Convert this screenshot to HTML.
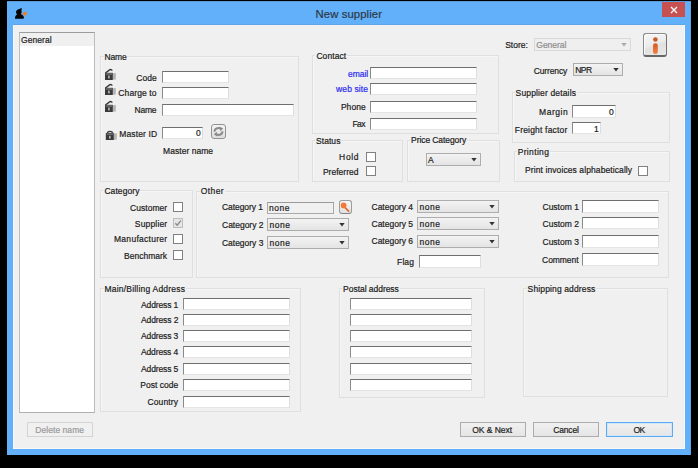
<!DOCTYPE html>
<html><head><meta charset="utf-8"><style>
html,body{margin:0;padding:0;width:698px;height:468px;overflow:hidden;background:#000}
.t{position:absolute;white-space:nowrap;font-family:"Liberation Sans",sans-serif;font-size:8.5px;line-height:11px;color:#1c1c1c;-webkit-text-stroke:0.2px currentColor}
</style></head><body>
<div style="position:absolute;left:0;top:0;width:698px;height:468px;background:#000"></div><div style="position:absolute;left:7.00px;top:1.00px;width:684.00px;height:454.00px;box-sizing:border-box;background:#62b0f9;border-top:1px solid #5a9dda;border-right:1px solid #5ea5e6;"></div><div style="position:absolute;left:13.00px;top:24.00px;width:672.00px;height:1.00px;box-sizing:border-box;background:#5ea6e8;"></div><div style="position:absolute;left:13.00px;top:25.00px;width:672.00px;height:424.00px;box-sizing:border-box;background:#f0f0f0;border:1px solid #f8f8f8;border-top:0;"></div><div class="t" style="left:315.60px;top:8.53px;color:#2d3946;font-size:11.3px;letter-spacing:0.091px;">New supplier</div><div style="position:absolute;left:662.00px;top:2.00px;width:23.00px;height:15.00px;box-sizing:border-box;background:#c75050;"></div><svg style="position:absolute;left:670px;top:6px" width="8" height="8" viewBox="0 0 8 8"><path d="M1 1L7 7M7 1L1 7" stroke="#fff" stroke-width="1.3"/></svg><svg style="position:absolute;left:13px;top:6px" width="16" height="14" viewBox="0 0 16 14"><path d="M4.2 8.3 C2.6 7.4 2.6 4.6 4.8 3.6 L8.9 2 L8.4 4.6 C8.9 6 8.6 7.4 7.9 8.3 C9.6 8.8 10.6 10 11.1 11.6 L10.4 12.7 H2 C1.8 10.6 2.8 8.9 4.2 8.3Z" fill="#050505"/>
<circle cx="11.8" cy="7.7" r="1.9" fill="#f57a1a"/></svg><div style="position:absolute;left:19.00px;top:32.00px;width:76.00px;height:381.00px;box-sizing:border-box;background:#fff;border:1px solid #bdbdbd;border-top-color:#9c9c9c;border-bottom-color:#b0b0b0;"></div><div style="position:absolute;left:20.00px;top:33.00px;width:74.00px;height:13.00px;box-sizing:border-box;background:#f0f0f0;"></div><div class="t" style="left:21.10px;top:34.80px;letter-spacing:0.033px;">General</div><div style="position:absolute;left:27.00px;top:422.00px;width:66.00px;height:15.00px;box-sizing:border-box;background:#f0f0f0;border:1px solid #d4d4d4;"></div><div class="t" style="left:35.30px;top:425.40px;color:#9a9a9a;letter-spacing:0.050px;">Delete name</div><div style="position:absolute;left:100.00px;top:56.00px;width:199.00px;height:126.00px;box-sizing:border-box;border:1px solid #dfdfdf;box-shadow:inset 1px 1px 0 #f6f6f6;"></div><div class="t" style="left:104.60px;top:52.30px;letter-spacing:-0.200px;background:#f0f0f0;padding:0 1px;margin-left:-1px;">Name</div><svg style="position:absolute;left:104px;top:67.5px" width="13" height="13" viewBox="0 0 13 13"><path d="M1.4 5 L5.6 1.9 C6.6 1.2 7.6 1.5 8.3 2.7" stroke="#333" stroke-width="1.3" fill="none"/>
<path d="M8.6 5.6 L11.8 4.9 L11.8 11.4 L8.6 11.8Z" fill="#b4b4b4"/>
<rect x="1" y="4.8" width="7.8" height="7.2" fill="#3a3a3a"/>
<rect x="1.8" y="5.5" width="6.2" height="1" fill="#8a8a8a"/>
<rect x="4.3" y="7.6" width="1.3" height="2.8" fill="#d5d5d5"/></svg><svg style="position:absolute;left:104px;top:82.5px" width="13" height="13" viewBox="0 0 13 13"><path d="M1.4 5 L5.6 1.9 C6.6 1.2 7.6 1.5 8.3 2.7" stroke="#333" stroke-width="1.3" fill="none"/>
<path d="M8.6 5.6 L11.8 4.9 L11.8 11.4 L8.6 11.8Z" fill="#b4b4b4"/>
<rect x="1" y="4.8" width="7.8" height="7.2" fill="#3a3a3a"/>
<rect x="1.8" y="5.5" width="6.2" height="1" fill="#8a8a8a"/>
<rect x="4.3" y="7.6" width="1.3" height="2.8" fill="#d5d5d5"/></svg><svg style="position:absolute;left:104px;top:99.5px" width="13" height="13" viewBox="0 0 13 13"><path d="M1.4 5 L5.6 1.9 C6.6 1.2 7.6 1.5 8.3 2.7" stroke="#333" stroke-width="1.3" fill="none"/>
<path d="M8.6 5.6 L11.8 4.9 L11.8 11.4 L8.6 11.8Z" fill="#b4b4b4"/>
<rect x="1" y="4.8" width="7.8" height="7.2" fill="#3a3a3a"/>
<rect x="1.8" y="5.5" width="6.2" height="1" fill="#8a8a8a"/>
<rect x="4.3" y="7.6" width="1.3" height="2.8" fill="#d5d5d5"/></svg><svg style="position:absolute;left:105px;top:127.5px" width="13" height="13" viewBox="0 0 13 13"><path d="M2.6 5 C2.6 2.9 7.4 2.9 7.4 5" stroke="#383838" stroke-width="1.3" fill="none"/>
<path d="M8.7 5.6 L11.8 5.2 L11.8 11.6 L8.7 12Z" fill="#b4b4b4"/>
<rect x="0.8" y="4.9" width="8" height="7.1" fill="#3a3a3a"/>
<rect x="1.6" y="5.6" width="6.4" height="1" fill="#8a8a8a"/>
<rect x="4.2" y="7.8" width="1.3" height="2.8" fill="#d5d5d5"/></svg><div class="t" style="left:136.30px;top:72.50px;">Code</div><div class="t" style="left:118.30px;top:88.20px;letter-spacing:0.112px;">Charge to</div><div class="t" style="left:134.50px;top:105.10px;letter-spacing:-0.200px;">Name</div><div class="t" style="left:119.30px;top:128.60px;letter-spacing:0.112px;">Master ID</div><div style="position:absolute;left:162.00px;top:71.00px;width:67.00px;height:12.00px;box-sizing:border-box;background:#fff;border-top:1px solid #6f6f6f;border-left:1px solid #8a8a8a;border-right:1px solid #dedede;border-bottom:1px solid #e4e4e4;"></div><div style="position:absolute;left:162.00px;top:87.00px;width:67.00px;height:12.00px;box-sizing:border-box;background:#fff;border-top:1px solid #6f6f6f;border-left:1px solid #8a8a8a;border-right:1px solid #dedede;border-bottom:1px solid #e4e4e4;"></div><div style="position:absolute;left:162.00px;top:104.00px;width:132.00px;height:12.00px;box-sizing:border-box;background:#fff;border-top:1px solid #6f6f6f;border-left:1px solid #8a8a8a;border-right:1px solid #dedede;border-bottom:1px solid #e4e4e4;"></div><div style="position:absolute;left:162.00px;top:127.00px;width:41.00px;height:12.00px;box-sizing:border-box;background:#fff;border-top:1px solid #6f6f6f;border-left:1px solid #8a8a8a;border-right:1px solid #dedede;border-bottom:1px solid #e4e4e4;"></div><div class="t" style="left:195.90px;top:128.30px;">0</div><div style="position:absolute;left:211.00px;top:124.00px;width:15.00px;height:15.00px;box-sizing:border-box;border:1px solid #929292;border-radius:3px;background:linear-gradient(#f4f4f4,#dedede);"></div><svg style="position:absolute;left:211px;top:124px" width="15" height="15" viewBox="0 0 15 15"><path d="M3.4 7.6 C3.6 4.6 6.6 3.4 9.6 4.6" stroke="#8a8a8a" stroke-width="2" fill="none"/>
<path d="M8.4 2.6 L12.2 4.4 L9.4 7.2Z" fill="#8a8a8a"/>
<path d="M11.6 7.4 C11.4 10.4 8.4 11.6 5.4 10.4" stroke="#8a8a8a" stroke-width="2" fill="none"/>
<path d="M6.6 12.4 L2.8 10.6 L5.6 7.8Z" fill="#8a8a8a"/></svg><div class="t" style="left:163.10px;top:145.60px;letter-spacing:0.040px;">Master name</div><div style="position:absolute;left:312.00px;top:55.00px;width:187.00px;height:79.00px;box-sizing:border-box;border:1px solid #dfdfdf;box-shadow:inset 1px 1px 0 #f6f6f6;"></div><div class="t" style="left:316.40px;top:50.90px;letter-spacing:0.083px;background:#f0f0f0;padding:0 1px;margin-left:-1px;">Contact</div><div class="t" style="left:348.00px;top:68.80px;color:#2a2af0;letter-spacing:-0.025px;">email</div><div class="t" style="left:336.10px;top:84.10px;color:#2a2af0;letter-spacing:0.100px;">web site</div><div class="t" style="left:340.90px;top:101.90px;letter-spacing:0.050px;">Phone</div><div class="t" style="left:352.50px;top:118.70px;letter-spacing:-0.600px;">Fax</div><div style="position:absolute;left:370.00px;top:67.00px;width:107.00px;height:12.00px;box-sizing:border-box;background:#fff;border-top:1px solid #6f6f6f;border-left:1px solid #8a8a8a;border-right:1px solid #dedede;border-bottom:1px solid #e4e4e4;"></div><div style="position:absolute;left:370.00px;top:83.00px;width:107.00px;height:12.00px;box-sizing:border-box;background:#fff;border-top:1px solid #6f6f6f;border-left:1px solid #8a8a8a;border-right:1px solid #dedede;border-bottom:1px solid #e4e4e4;"></div><div style="position:absolute;left:370.00px;top:101.00px;width:107.00px;height:12.00px;box-sizing:border-box;background:#fff;border-top:1px solid #6f6f6f;border-left:1px solid #8a8a8a;border-right:1px solid #dedede;border-bottom:1px solid #e4e4e4;"></div><div style="position:absolute;left:370.00px;top:118.00px;width:107.00px;height:12.00px;box-sizing:border-box;background:#fff;border-top:1px solid #6f6f6f;border-left:1px solid #8a8a8a;border-right:1px solid #dedede;border-bottom:1px solid #e4e4e4;"></div><div style="position:absolute;left:312.00px;top:140.00px;width:91.00px;height:42.00px;box-sizing:border-box;border:1px solid #dfdfdf;box-shadow:inset 1px 1px 0 #f6f6f6;"></div><div class="t" style="left:316.10px;top:136.10px;letter-spacing:0.040px;background:#f0f0f0;padding:0 1px;margin-left:-1px;">Status</div><div class="t" style="left:339.10px;top:151.80px;letter-spacing:0.667px;">Hold</div><div class="t" style="left:322.90px;top:166.50px;letter-spacing:0.025px;">Preferred</div><div style="position:absolute;left:366.00px;top:152.00px;width:10.00px;height:10.00px;box-sizing:border-box;background:#fff;border:1px solid #808080;"></div><div style="position:absolute;left:366.00px;top:166.00px;width:10.00px;height:10.00px;box-sizing:border-box;background:#fff;border:1px solid #808080;"></div><div style="position:absolute;left:407.00px;top:140.00px;width:93.00px;height:42.00px;box-sizing:border-box;border:1px solid #dfdfdf;box-shadow:inset 1px 1px 0 #f6f6f6;"></div><div class="t" style="left:411.10px;top:135.10px;letter-spacing:-0.085px;background:#f0f0f0;padding:0 1px;margin-left:-1px;">Price Category</div><div style="position:absolute;left:426.00px;top:153.00px;width:55.00px;height:13.00px;box-sizing:border-box;background:linear-gradient(#f3f3f3,#e4e4e4);border:1px solid #adadad;"></div><div class="t" style="left:428.00px;top:154.60px;">A</div><svg style="position:absolute;left:471.20px;top:158.20px" width="6" height="4" viewBox="0 0 6 4"><path d="M0.3 0H5.7L3 3.6Z" fill="#333"/></svg><div class="t" style="left:505.20px;top:40.10px;">Store:</div><div style="position:absolute;left:534.00px;top:38.00px;width:97.00px;height:13.00px;box-sizing:border-box;background:#efefef;border:1px solid #d9d9d9;"></div><div class="t" style="left:536.30px;top:39.60px;color:#8d8d8d;letter-spacing:-0.033px;">General</div><svg style="position:absolute;left:621.20px;top:43.20px" width="6" height="4" viewBox="0 0 6 4"><path d="M0.3 0H5.7L3 3.6Z" fill="#a8a8a8"/></svg><div class="t" style="left:533.70px;top:65.80px;letter-spacing:-0.129px;">Currency</div><div style="position:absolute;left:573.00px;top:63.00px;width:50.00px;height:13.00px;box-sizing:border-box;background:linear-gradient(#f3f3f3,#e4e4e4);border:1px solid #adadad;"></div><div class="t" style="left:575.20px;top:64.60px;letter-spacing:-0.550px;">NPR</div><svg style="position:absolute;left:613.20px;top:68.20px" width="6" height="4" viewBox="0 0 6 4"><path d="M0.3 0H5.7L3 3.6Z" fill="#333"/></svg><div style="position:absolute;left:643.00px;top:33.00px;width:24.00px;height:24.00px;box-sizing:border-box;border:1px solid #8a8a8a;border-right-color:#727272;border-bottom:2px solid #666;border-radius:3px;background:linear-gradient(160deg,#f5f5f5 0%,#ededed 45%,#e1e1e1 58%,#e8e8e8 100%);box-shadow:inset 1px 1px 0 #fbfbfb;"></div><svg style="position:absolute;left:643px;top:33px" width="24" height="24" viewBox="0 0 24 24"><defs><linearGradient id="ig" x1="0" y1="0" x2="0" y2="1"><stop offset="0" stop-color="#d45a22"/><stop offset="1" stop-color="#f2813e"/></linearGradient></defs><circle cx="12.4" cy="6.5" r="2.3" fill="#c95a28"/>
<rect x="10" y="10.2" width="4.8" height="10.8" rx="2.3" fill="url(#ig)"/></svg><div style="position:absolute;left:512.00px;top:92.00px;width:158.00px;height:51.00px;box-sizing:border-box;border:1px solid #dfdfdf;box-shadow:inset 1px 1px 0 #f6f6f6;"></div><div class="t" style="left:515.60px;top:87.90px;letter-spacing:0.147px;background:#f0f0f0;padding:0 1px;margin-left:-1px;">Supplier details</div><div class="t" style="left:539.10px;top:107.40px;letter-spacing:0.520px;">Margin</div><div class="t" style="left:514.80px;top:124.50px;letter-spacing:0.185px;">Freight factor</div><div style="position:absolute;left:572.00px;top:105.00px;width:44.00px;height:13.00px;box-sizing:border-box;background:#fff;border-top:1px solid #6f6f6f;border-left:1px solid #8a8a8a;border-right:1px solid #dedede;border-bottom:1px solid #e4e4e4;"></div><div class="t" style="left:609.00px;top:106.90px;">0</div><div style="position:absolute;left:572.00px;top:122.00px;width:29.00px;height:12.00px;box-sizing:border-box;background:#fff;border-top:1px solid #6f6f6f;border-left:1px solid #8a8a8a;border-right:1px solid #dedede;border-bottom:1px solid #e4e4e4;"></div><div class="t" style="left:594.00px;top:123.90px;">1</div><div style="position:absolute;left:514.00px;top:151.00px;width:156.00px;height:31.00px;box-sizing:border-box;border:1px solid #dfdfdf;box-shadow:inset 1px 1px 0 #f6f6f6;"></div><div class="t" style="left:517.70px;top:146.70px;letter-spacing:0.343px;background:#f0f0f0;padding:0 1px;margin-left:-1px;">Printing</div><div class="t" style="left:525.00px;top:164.90px;letter-spacing:0.096px;">Print invoices alphabetically</div><div style="position:absolute;left:638.00px;top:166.00px;width:10.00px;height:10.00px;box-sizing:border-box;background:#fff;border:1px solid #808080;"></div><div style="position:absolute;left:100.00px;top:190.00px;width:93.00px;height:88.00px;box-sizing:border-box;border:1px solid #dfdfdf;box-shadow:inset 1px 1px 0 #f6f6f6;"></div><div class="t" style="left:104.40px;top:186.10px;letter-spacing:0.071px;background:#f0f0f0;padding:0 1px;margin-left:-1px;">Category</div><div class="t" style="left:130.00px;top:202.80px;letter-spacing:0.043px;">Customer</div><div class="t" style="left:134.80px;top:218.50px;letter-spacing:0.171px;">Supplier</div><div class="t" style="left:114.00px;top:234.10px;letter-spacing:0.282px;">Manufacturer</div><div class="t" style="left:124.10px;top:250.90px;letter-spacing:-0.012px;">Benchmark</div><div style="position:absolute;left:173.00px;top:202.00px;width:10.00px;height:10.00px;box-sizing:border-box;background:#fff;border:1px solid #808080;"></div><div style="position:absolute;left:173.00px;top:218.00px;width:10.00px;height:10.00px;box-sizing:border-box;background:#e6e6e6;border:1px solid #bdbdbd;"></div><svg style="position:absolute;left:173px;top:218px" width="10" height="10" viewBox="0 0 10 10"><path d="M2.3 5.2L4.2 7.2L7.8 2.6" stroke="#8a8a8a" stroke-width="1.4" fill="none"/></svg><div style="position:absolute;left:173.00px;top:234.00px;width:10.00px;height:10.00px;box-sizing:border-box;background:#fff;border:1px solid #808080;"></div><div style="position:absolute;left:173.00px;top:250.00px;width:10.00px;height:10.00px;box-sizing:border-box;background:#fff;border:1px solid #808080;"></div><div style="position:absolute;left:196.00px;top:191.00px;width:473.00px;height:87.00px;box-sizing:border-box;border:1px solid #dfdfdf;box-shadow:inset 1px 1px 0 #f6f6f6;"></div><div class="t" style="left:200.80px;top:185.70px;letter-spacing:0.400px;background:#f0f0f0;padding:0 1px;margin-left:-1px;">Other</div><div class="t" style="left:222.00px;top:202.40px;letter-spacing:-0.078px;">Category 1</div><div class="t" style="left:222.00px;top:220.30px;letter-spacing:-0.011px;">Category 2</div><div class="t" style="left:222.00px;top:238.00px;letter-spacing:-0.022px;">Category 3</div><div style="position:absolute;left:267.00px;top:202.00px;width:67.00px;height:12.00px;box-sizing:border-box;background:#f0f0f0;border:1px solid #a9a9a9;border-top-color:#9a9a9a;"></div><div class="t" style="left:268.90px;top:203.30px;letter-spacing:0.533px;">none</div><div style="position:absolute;left:339.00px;top:200.00px;width:13.00px;height:14.00px;box-sizing:border-box;border:1px solid #9c9c9c;border-bottom-color:#858585;border-radius:3px;background:linear-gradient(#f7f7f7,#e0e0e0);"></div><svg style="position:absolute;left:339px;top:200px" width="14" height="14" viewBox="0 0 14 14"><path d="M5 6.5 L9.6 11.2" stroke="#e06a2c" stroke-width="1.7" stroke-linecap="round"/>
<circle cx="4.6" cy="5.4" r="2.9" fill="#f07a38"/></svg><div style="position:absolute;left:267.00px;top:218.00px;width:82.00px;height:13.00px;box-sizing:border-box;background:linear-gradient(#f3f3f3,#e4e4e4);border:1px solid #adadad;"></div><div class="t" style="left:269.60px;top:219.60px;letter-spacing:0.467px;">none</div><svg style="position:absolute;left:339.20px;top:223.20px" width="6" height="4" viewBox="0 0 6 4"><path d="M0.3 0H5.7L3 3.6Z" fill="#333"/></svg><div style="position:absolute;left:267.00px;top:236.00px;width:82.00px;height:13.00px;box-sizing:border-box;background:linear-gradient(#f3f3f3,#e4e4e4);border:1px solid #adadad;"></div><div class="t" style="left:269.60px;top:237.60px;letter-spacing:0.467px;">none</div><svg style="position:absolute;left:339.20px;top:241.20px" width="6" height="4" viewBox="0 0 6 4"><path d="M0.3 0H5.7L3 3.6Z" fill="#333"/></svg><div class="t" style="left:371.50px;top:202.00px;letter-spacing:-0.011px;">Category 4</div><div class="t" style="left:371.50px;top:218.90px;">Category 5</div><div class="t" style="left:371.50px;top:236.40px;">Category 6</div><div style="position:absolute;left:417.00px;top:200.00px;width:82.00px;height:13.00px;box-sizing:border-box;background:linear-gradient(#f3f3f3,#e4e4e4);border:1px solid #adadad;"></div><div class="t" style="left:419.60px;top:201.60px;letter-spacing:0.533px;">none</div><svg style="position:absolute;left:489.20px;top:205.20px" width="6" height="4" viewBox="0 0 6 4"><path d="M0.3 0H5.7L3 3.6Z" fill="#333"/></svg><div style="position:absolute;left:417.00px;top:217.00px;width:82.00px;height:13.00px;box-sizing:border-box;background:linear-gradient(#f3f3f3,#e4e4e4);border:1px solid #adadad;"></div><div class="t" style="left:419.60px;top:218.60px;letter-spacing:0.533px;">none</div><svg style="position:absolute;left:489.20px;top:222.20px" width="6" height="4" viewBox="0 0 6 4"><path d="M0.3 0H5.7L3 3.6Z" fill="#333"/></svg><div style="position:absolute;left:417.00px;top:235.00px;width:82.00px;height:13.00px;box-sizing:border-box;background:linear-gradient(#f3f3f3,#e4e4e4);border:1px solid #adadad;"></div><div class="t" style="left:419.60px;top:236.60px;letter-spacing:0.533px;">none</div><svg style="position:absolute;left:489.20px;top:240.20px" width="6" height="4" viewBox="0 0 6 4"><path d="M0.3 0H5.7L3 3.6Z" fill="#333"/></svg><div class="t" style="left:397.10px;top:257.00px;letter-spacing:0.100px;">Flag</div><div style="position:absolute;left:419.00px;top:255.00px;width:62.00px;height:13.00px;box-sizing:border-box;background:#fff;border-top:1px solid #6f6f6f;border-left:1px solid #8a8a8a;border-right:1px solid #dedede;border-bottom:1px solid #e4e4e4;"></div><div class="t" style="left:542.50px;top:202.00px;">Custom 1</div><div class="t" style="left:542.50px;top:218.50px;letter-spacing:0.014px;">Custom 2</div><div class="t" style="left:542.50px;top:236.80px;">Custom 3</div><div class="t" style="left:542.10px;top:254.50px;letter-spacing:-0.067px;">Comment</div><div style="position:absolute;left:582.00px;top:200.00px;width:77.00px;height:13.00px;box-sizing:border-box;background:#fff;border-top:1px solid #6f6f6f;border-left:1px solid #8a8a8a;border-right:1px solid #dedede;border-bottom:1px solid #e4e4e4;"></div><div style="position:absolute;left:582.00px;top:217.00px;width:77.00px;height:12.00px;box-sizing:border-box;background:#fff;border-top:1px solid #6f6f6f;border-left:1px solid #8a8a8a;border-right:1px solid #dedede;border-bottom:1px solid #e4e4e4;"></div><div style="position:absolute;left:582.00px;top:235.00px;width:77.00px;height:13.00px;box-sizing:border-box;background:#fff;border-top:1px solid #6f6f6f;border-left:1px solid #8a8a8a;border-right:1px solid #dedede;border-bottom:1px solid #e4e4e4;"></div><div style="position:absolute;left:582.00px;top:253.00px;width:77.00px;height:13.00px;box-sizing:border-box;background:#fff;border-top:1px solid #6f6f6f;border-left:1px solid #8a8a8a;border-right:1px solid #dedede;border-bottom:1px solid #e4e4e4;"></div><div style="position:absolute;left:100.00px;top:288.00px;width:201.00px;height:124.00px;box-sizing:border-box;border:1px solid #dfdfdf;box-shadow:inset 1px 1px 0 #f6f6f6;"></div><div class="t" style="left:104.50px;top:284.10px;letter-spacing:0.205px;background:#f0f0f0;padding:0 1px;margin-left:-1px;">Main/Billing Address</div><div class="t" style="left:141.00px;top:299.60px;letter-spacing:-0.125px;">Address 1</div><div style="position:absolute;left:183.00px;top:298.00px;width:107.00px;height:12.00px;box-sizing:border-box;background:#fff;border-top:1px solid #6f6f6f;border-left:1px solid #8a8a8a;border-right:1px solid #dedede;border-bottom:1px solid #e4e4e4;"></div><div class="t" style="left:141.00px;top:315.10px;letter-spacing:-0.112px;">Address 2</div><div style="position:absolute;left:183.00px;top:314.00px;width:107.00px;height:12.00px;box-sizing:border-box;background:#fff;border-top:1px solid #6f6f6f;border-left:1px solid #8a8a8a;border-right:1px solid #dedede;border-bottom:1px solid #e4e4e4;"></div><div class="t" style="left:141.00px;top:330.90px;letter-spacing:-0.125px;">Address 3</div><div style="position:absolute;left:183.00px;top:330.00px;width:107.00px;height:12.00px;box-sizing:border-box;background:#fff;border-top:1px solid #6f6f6f;border-left:1px solid #8a8a8a;border-right:1px solid #dedede;border-bottom:1px solid #e4e4e4;"></div><div class="t" style="left:141.00px;top:347.40px;letter-spacing:-0.137px;">Address 4</div><div style="position:absolute;left:183.00px;top:346.00px;width:107.00px;height:12.00px;box-sizing:border-box;background:#fff;border-top:1px solid #6f6f6f;border-left:1px solid #8a8a8a;border-right:1px solid #dedede;border-bottom:1px solid #e4e4e4;"></div><div class="t" style="left:141.00px;top:363.90px;letter-spacing:-0.125px;">Address 5</div><div style="position:absolute;left:183.00px;top:363.00px;width:107.00px;height:12.00px;box-sizing:border-box;background:#fff;border-top:1px solid #6f6f6f;border-left:1px solid #8a8a8a;border-right:1px solid #dedede;border-bottom:1px solid #e4e4e4;"></div><div class="t" style="left:140.30px;top:380.20px;letter-spacing:0.025px;">Post code</div><div style="position:absolute;left:183.00px;top:379.00px;width:107.00px;height:12.00px;box-sizing:border-box;background:#fff;border-top:1px solid #6f6f6f;border-left:1px solid #8a8a8a;border-right:1px solid #dedede;border-bottom:1px solid #e4e4e4;"></div><div class="t" style="left:147.50px;top:396.60px;letter-spacing:0.117px;">Country</div><div style="position:absolute;left:183.00px;top:396.00px;width:107.00px;height:12.00px;box-sizing:border-box;background:#fff;border-top:1px solid #6f6f6f;border-left:1px solid #8a8a8a;border-right:1px solid #dedede;border-bottom:1px solid #e4e4e4;"></div><div style="position:absolute;left:339.00px;top:288.00px;width:146.00px;height:110.00px;box-sizing:border-box;border:1px solid #dfdfdf;box-shadow:inset 1px 1px 0 #f6f6f6;"></div><div class="t" style="left:343.10px;top:283.90px;letter-spacing:-0.038px;background:#f0f0f0;padding:0 1px;margin-left:-1px;">Postal address</div><div style="position:absolute;left:350.00px;top:298.00px;width:121.50px;height:12.00px;box-sizing:border-box;background:#fff;border-top:1px solid #6f6f6f;border-left:1px solid #8a8a8a;border-right:1px solid #dedede;border-bottom:1px solid #e4e4e4;"></div><div style="position:absolute;left:350.00px;top:314.00px;width:121.50px;height:12.00px;box-sizing:border-box;background:#fff;border-top:1px solid #6f6f6f;border-left:1px solid #8a8a8a;border-right:1px solid #dedede;border-bottom:1px solid #e4e4e4;"></div><div style="position:absolute;left:350.00px;top:330.00px;width:121.50px;height:12.00px;box-sizing:border-box;background:#fff;border-top:1px solid #6f6f6f;border-left:1px solid #8a8a8a;border-right:1px solid #dedede;border-bottom:1px solid #e4e4e4;"></div><div style="position:absolute;left:350.00px;top:346.00px;width:121.50px;height:12.00px;box-sizing:border-box;background:#fff;border-top:1px solid #6f6f6f;border-left:1px solid #8a8a8a;border-right:1px solid #dedede;border-bottom:1px solid #e4e4e4;"></div><div style="position:absolute;left:350.00px;top:363.00px;width:121.50px;height:12.00px;box-sizing:border-box;background:#fff;border-top:1px solid #6f6f6f;border-left:1px solid #8a8a8a;border-right:1px solid #dedede;border-bottom:1px solid #e4e4e4;"></div><div style="position:absolute;left:350.00px;top:379.00px;width:121.50px;height:12.00px;box-sizing:border-box;background:#fff;border-top:1px solid #6f6f6f;border-left:1px solid #8a8a8a;border-right:1px solid #dedede;border-bottom:1px solid #e4e4e4;"></div><div style="position:absolute;left:523.00px;top:288.00px;width:145.00px;height:109.00px;box-sizing:border-box;border:1px solid #dfdfdf;box-shadow:inset 1px 1px 0 #f6f6f6;"></div><div class="t" style="left:527.60px;top:284.00px;letter-spacing:0.133px;background:#f0f0f0;padding:0 1px;margin-left:-1px;">Shipping address</div><div style="position:absolute;left:460.00px;top:422.00px;width:66.00px;height:15.00px;box-sizing:border-box;background:linear-gradient(#f0f0f0,#e5e5e5);border:1px solid #acacac;"></div><div class="t" style="left:472.20px;top:425.40px;letter-spacing:-0.038px;">OK &amp; Next</div><div style="position:absolute;left:533.00px;top:422.00px;width:66.00px;height:15.00px;box-sizing:border-box;background:linear-gradient(#f0f0f0,#e5e5e5);border:1px solid #acacac;"></div><div class="t" style="left:553.20px;top:425.40px;letter-spacing:-0.140px;">Cancel</div><div style="position:absolute;left:606.00px;top:422.00px;width:67.00px;height:15.00px;box-sizing:border-box;background:linear-gradient(#f0f0f0,#e5e5e5);border:1px solid #5aabf4;box-shadow:inset 0 0 0 1px #cfe6fb;"></div><div class="t" style="left:633.40px;top:425.40px;letter-spacing:-0.500px;">OK</div>
</body></html>
